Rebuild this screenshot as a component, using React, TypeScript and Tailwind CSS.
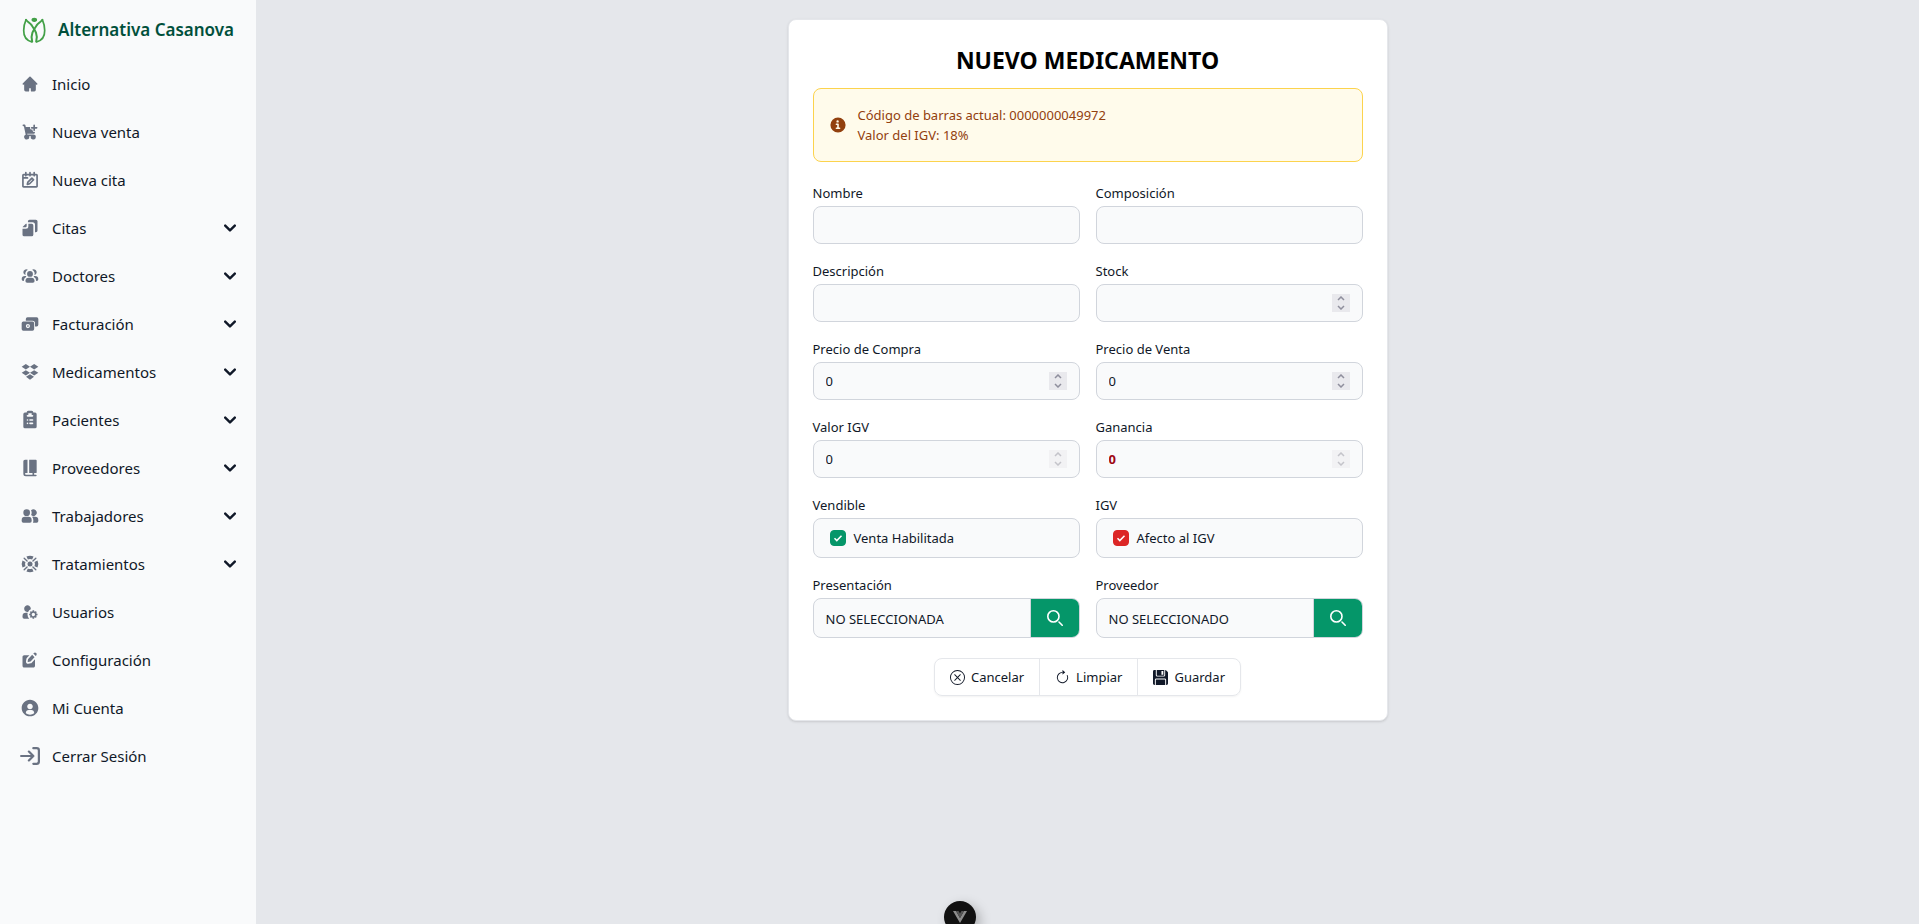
import { useState, type ReactNode } from "react";
import { BsXCircle, BsArrowClockwise, BsFloppyFill } from "react-icons/bs";

type NavItem = { label: string; icon: ReactNode; expandable?: boolean };

function Icon({ children }: { children: ReactNode }) {
  return (
    <svg className="size-5 shrink-0 text-gray-500" viewBox="0 0 24 24" fill="currentColor" fillRule="evenodd" aria-hidden="true">
      {children}
    </svg>
  );
}

const items: NavItem[] = [
  {
    label: "Inicio",
    icon: (
      <Icon>
        <path d="M11.293 3.293a1 1 0 0 1 1.414 0l6 6 2 2a1 1 0 0 1-1.414 1.414L19 12.414V19a2 2 0 0 1-2 2h-3a1 1 0 0 1-1-1v-3h-2v3a1 1 0 0 1-1 1H7a2 2 0 0 1-2-2v-6.586l-.293.293a1 1 0 0 1-1.414-1.414l2-2 6-6Z" />
      </Icon>
    ),
  },
  {
    label: "Nueva venta",
    icon: (
      <Icon>
        <path d="M12.268 6A2 2 0 0 0 14 9h1v1a2 2 0 0 0 3.04 1.708l-.311 1.496a1 1 0 0 1-.979.796H8.605l.208 1H16a3 3 0 1 1-2.83 2h-2.34a3 3 0 1 1-4.009-1.76L4.686 5H4a1 1 0 0 1 0-2h1.5a1 1 0 0 1 .979.796L6.939 6h5.329Z" />
        <path d="M18 4a1 1 0 1 0-2 0v2h-2a1 1 0 1 0 0 2h2v2a1 1 0 1 0 2 0V8h2a1 1 0 1 0 0-2h-2V4Z" />
      </Icon>
    ),
  },
  {
    label: "Nueva cita",
    icon: (
      <Icon>
        <g fill="none" stroke="currentColor" strokeWidth="2" strokeLinecap="round" strokeLinejoin="round">
          <path d="M3.500 6.400v13.100a.8.8 0 0 0 .8.8h15.400a.8.8 0 0 0 .8-.8V6.400a.8.800 0 0 0-.8-.8H4.300a.8.8 0 0 0-.8.8ZM4 9.500h5M7 3v4M12 3v4M17 3v4" />
          <path d="m9.500 14.500 4.800-4.800 2 2-4.800 4.800-2.700.700.700-2.700Z" />
        </g>
      </Icon>
    ),
  },
  {
    label: "Citas",
    expandable: true,
    icon: (
      <Icon>
        <path d="M9.500 4a2 2 0 0 1 2-2H19a2 2 0 0 1 2 2v11a2 2 0 0 1-2 2h-1V8a3 3 0 0 0-3-3H9.500V4Z" />
        <path d="M8 7v3a1 1 0 0 1-1 1H3.200c.1-.3.200-.5.500-.8l2.700-2.700c.3-.3.500-.400.800-.5H8Zm2 0v3a3 3 0 0 1-3 3H3v7a2 2 0 0 0 2 2h9a2 2 0 0 0 2-2V9a2 2 0 0 0-2-2h-4Z" />
      </Icon>
    ),
  },
  {
    label: "Doctores",
    expandable: true,
    icon: (
      <Icon>
        <path d="M12 6a3.5 3.5 0 1 0 0 7 3.5 3.5 0 0 0 0-7Zm-1.5 8a4 4 0 0 0-4 4 2 2 0 0 0 2 2h7a2 2 0 0 0 2-2 4 4 0 0 0-4-4h-3Zm6.82-3.096a5.51 5.51 0 0 0-2.797-6.293 3.5 3.5 0 1 1 2.796 6.292ZM19.5 18h.5a2 2 0 0 0 2-2 4 4 0 0 0-4-4h-1.1a5.503 5.503 0 0 1-.471.762A5.998 5.998 0 0 1 19.5 18ZM4 7.5a3.5 3.5 0 0 1 5.477-2.889 5.5 5.5 0 0 0-2.796 6.293A3.501 3.501 0 0 1 4 7.5ZM7.1 12H6a4 4 0 0 0-4 4 2 2 0 0 0 2 2h.5a5.998 5.998 0 0 1 3.071-5.238A5.505 5.505 0 0 1 7.1 12Z" />
      </Icon>
    ),
  },
  {
    label: "Facturación",
    expandable: true,
    icon: (
      <Icon>
        <path d="M7 6a2 2 0 0 1 2-2h11a2 2 0 0 1 2 2v7a2 2 0 0 1-2 2h-2v-4a3 3 0 0 0-3-3H7V6Z" />
        <path d="M2 11a2 2 0 0 1 2-2h11a2 2 0 0 1 2 2v7a2 2 0 0 1-2 2H4a2 2 0 0 1-2-2v-7Zm7.5 1a2.5 2.5 0 1 0 0 5 2.5 2.5 0 0 0 0-5Z" />
        <path d="M10.5 14.5a1 1 0 1 1-2 0 1 1 0 0 1 2 0Z" />
      </Icon>
    ),
  },
  {
    label: "Medicamentos",
    expandable: true,
    icon: (
      <Icon>
        <path d="M7 2.500 12 5.700 7 8.900 2 5.700ZM17 2.500l5 3.200-5 3.200-5-3.200ZM7 9.800l5 3.200-5 3.200L2 13ZM17 9.800l5 3.200-5 3.200-5-3.200ZM7.200 17.800l4.800-3 4.800 3-4.800 3.500Z" />
      </Icon>
    ),
  },
  {
    label: "Pacientes",
    expandable: true,
    icon: (
      <Icon>
        <path d="M8 3a2 2 0 0 1 2-2h4a2 2 0 0 1 2 2h2a2 2 0 0 1 2 2v15a2 2 0 0 1-2 2H6a2 2 0 0 1-2-2V5a2 2 0 0 1 2-2h2Zm6 1h-4v2H9a1 1 0 0 0 0 2h6a1 1 0 1 0 0-2h-1V4Zm-3 8a1 1 0 0 1 1-1h3a1 1 0 1 1 0 2h-3a1 1 0 0 1-1-1Zm-2-1a1 1 0 1 0 0 2h.01a1 1 0 1 0 0-2H9Zm2 5a1 1 0 0 1 1-1h3a1 1 0 1 1 0 2h-3a1 1 0 0 1-1-1Zm-2-1a1 1 0 1 0 0 2h.01a1 1 0 1 0 0-2H9Z" />
      </Icon>
    ),
  },
  {
    label: "Proveedores",
    expandable: true,
    icon: (
      <Icon>
        <path d="M6 2a2 2 0 0 0-2 2v15a3 3 0 0 0 3 3h12a1 1 0 1 0 0-2h-2v-2h2a1 1 0 0 0 1-1V3a1 1 0 0 0-1-1h-8v16h4v2H7a1 1 0 1 1 0-2h2V2H6Z" />
      </Icon>
    ),
  },
  {
    label: "Trabajadores",
    expandable: true,
    icon: (
      <Icon>
        <path d="M8 4a4 4 0 1 0 0 8 4 4 0 0 0 0-8Zm-2 9a4 4 0 0 0-4 4v1a2 2 0 0 0 2 2h8a2 2 0 0 0 2-2v-1a4 4 0 0 0-4-4H6Zm7.25-2.095c.478-.86.75-1.85.75-2.905a5.973 5.973 0 0 0-.75-2.906 4 4 0 1 1 0 5.811ZM15.466 20c.34-.588.535-1.271.535-2v-1a5.978 5.978 0 0 0-1.528-4H18a4 4 0 0 1 4 4v1a2 2 0 0 1-2 2h-4.535Z" />
      </Icon>
    ),
  },
  {
    label: "Tratamientos",
    expandable: true,
    icon: (
      <Icon>
        <circle cx="12" cy="12" r="3" />
        <g fill="none" stroke="currentColor" strokeWidth="4">
          <path d="M8.600 4.800a8 8 0 0 1 6.800 0M8.600 19.200a8 8 0 0 0 6.800 0M4.800 8.600a8 8 0 0 0 0 6.800M19.200 8.600a8 8 0 0 1 0 6.800" />
        </g>
        <g fill="none" stroke="currentColor" strokeWidth="1.600" strokeLinecap="round">
          <path d="m5 5 3.500 3.500M19 5l-3.500 3.500M5 19l3.500-3.500M19 19l-3.500-3.500" />
        </g>
      </Icon>
    ),
  },
  {
    label: "Usuarios",
    icon: (
      <Icon>
        <path d="M17 10v1.126c.367.095.714.24 1.032.428l.796-.797 1.415 1.415-.797.796c.188.318.333.665.428 1.032H21v2h-1.126c-.095.367-.24.714-.428 1.032l.797.796-1.415 1.415-.796-.797a3.979 3.979 0 0 1-1.032.428V20h-2v-1.126a3.977 3.977 0 0 1-1.032-.428l-.796.797-1.415-1.415.797-.796A3.975 3.975 0 0 1 12.126 16H11v-2h1.126c.095-.367.24-.714.428-1.032l-.797-.796 1.415-1.415.796.797A3.977 3.977 0 0 1 15 11.126V10h2Zm.406 3.578.016.016c.354.358.574.85.578 1.392v.028a2 2 0 0 1-3.409 1.406l-.01-.012a2 2 0 0 1 2.826-2.83ZM5 8a4 4 0 1 1 7.938.703 7.029 7.029 0 0 0-3.235 3.235A4 4 0 0 1 5 8Zm4.29 5H7a4 4 0 0 0-4 4v1a2 2 0 0 0 2 2h6.101A6.979 6.979 0 0 1 9 15c0-.695.101-1.366.29-2Z" />
      </Icon>
    ),
  },
  {
    label: "Configuración",
    icon: (
      <Icon>
        <path d="M11.32 6.176H5c-1.105 0-2 .949-2 2.118v10.588C3 20.052 3.895 21 5 21h11c1.105 0 2-.948 2-2.118v-7.75l-3.914 4.144A2.46 2.46 0 0 1 12.81 16l-2.681.568c-1.75.37-3.292-1.263-2.942-3.115l.536-2.839c.097-.512.335-.983.684-1.352l2.914-3.086Z" />
        <path d="M19.846 4.318a2.148 2.148 0 0 0-.437-.692 2.014 2.014 0 0 0-.654-.463 1.92 1.92 0 0 0-1.544 0 2.014 2.014 0 0 0-.654.463l-.546.578 2.852 3.02.546-.579a2.14 2.14 0 0 0 .437-.692 2.244 2.244 0 0 0 0-1.635ZM17.45 8.721 14.597 5.7 9.82 10.76a.54.54 0 0 0-.137.27l-.536 2.84c-.07.37.239.696.588.622l2.682-.567a.492.492 0 0 0 .255-.145l4.778-5.06Z" />
      </Icon>
    ),
  },
  {
    label: "Mi Cuenta",
    icon: (
      <Icon>
        <path d="M12 20a7.966 7.966 0 0 1-5.002-1.756l.002.001v-.683c0-1.794 1.492-3.25 3.333-3.25h3.334c1.84 0 3.333 1.456 3.333 3.25v.683A7.966 7.966 0 0 1 12 20ZM2 12C2 6.477 6.477 2 12 2s10 4.477 10 10c0 5.5-4.44 9.963-9.932 10h-.138C6.438 21.962 2 17.5 2 12Zm10-5c-1.84 0-3.333 1.455-3.333 3.25S10.159 13.5 12 13.5c1.84 0 3.333-1.455 3.333-3.25S13.841 7 12 7Z" />
      </Icon>
    ),
  },
  {
    label: "Cerrar Sesión",
    icon: (
      <svg className="size-5 shrink-0 text-gray-500" viewBox="0 0 18 16" fill="none" aria-hidden="true">
        <path d="M1 8h11m0 0L8 4m4 4-4 4m4-11h3a2 2 0 0 1 2 2v10a2 2 0 0 1-2 2h-3" stroke="currentColor" strokeWidth="2" strokeLinecap="round" strokeLinejoin="round" />
      </svg>
    ),
  },
];

function Logo() {
  return (
    <svg className="h-7 w-6 shrink-0" viewBox="0 0 24 28" fill="none" aria-hidden="true">
      <ellipse cx="12.300" cy="3.800" rx="2.800" ry="2.100" fill="#43a047" />
      <g stroke="#43a047" strokeLinecap="round" strokeLinejoin="round">
        <path d="M9.800 25.800C4.500 24.500 1.600 20 1.700 14.500 1.800 10.500 2.700 6.500 4 3.800" strokeWidth="1.700" />
        <path d="M14.600 25.800c5.300-1.300 8.200-5.800 8.100-11.300-.1-4-1-8-2.300-10.700" strokeWidth="1.700" />
        <path d="M4 3.800C5.500 6 8 7 9.600 9.200c3 4.300 6.800 9.300 4.600 16.300" strokeWidth="2" />
        <path d="M20.400 3.800c-1.500 2.200-4 3.200-5.600 5.400-3 4.300-6.800 9.300-4.600 16.300" strokeWidth="2" />
      </g>
    </svg>
  );
}

function Sidebar() {
  return (
    <aside className="w-64 shrink-0 bg-gray-50">
      <a href="#" className="flex h-[60px] items-center gap-3 pl-[22px]">
        <Logo />
        <span className="text-[17px] leading-7 font-semibold text-emerald-900">Alternativa Casanova</span>
      </a>
      <nav>
        <ul className="px-3">
          {items.map((item) => (
            <li key={item.label}>
              {item.expandable ? (
                <button type="button" className="flex h-12 w-full items-center gap-3 px-2 text-left text-gray-900">
                  {item.icon}
                  <span className="flex-1">{item.label}</span>
                  <svg className="size-3" viewBox="0 0 10 6" fill="none" aria-hidden="true">
                    <path d="m1 1 4 4 4-4" stroke="currentColor" strokeWidth="2" strokeLinecap="round" strokeLinejoin="round" />
                  </svg>
                </button>
              ) : (
                <a href="#" className="flex h-12 items-center gap-3 px-2 text-gray-900">
                  {item.icon}
                  <span>{item.label}</span>
                </a>
              )}
            </li>
          ))}
        </ul>
      </nav>
    </aside>
  );
}

const boxClass = "flex w-full items-center rounded-lg border border-gray-300 bg-gray-50";

function Field({ id, label, children }: { id: string; label: string; children: ReactNode }) {
  return (
    <div>
      <label htmlFor={id} className="mb-0.5 block leading-[22px]">
        {label}
      </label>
      {children}
    </div>
  );
}

function TextField({ id, label }: { id: string; label: string }) {
  return (
    <Field id={id} label={label}>
      <input id={id} type="text" className="block h-[38px] w-full rounded-lg border border-gray-300 bg-gray-50 px-3" />
    </Field>
  );
}

function NumberField({ id, label, initial = "", readOnly = false, strong = false }: { id: string; label: string; initial?: string; readOnly?: boolean; strong?: boolean }) {
  const [value, setValue] = useState(initial);
  const step = (delta: number) => setValue(String(Number(value) + delta));
  return (
    <Field id={id} label={label}>
      <div className={`${boxClass} h-[38px] px-3`}>
        <input
          id={id}
          type="text"
          inputMode="decimal"
          value={value}
          readOnly={readOnly}
          onChange={(e) => setValue(e.target.value)}
          className={`min-w-0 flex-1 bg-transparent pt-0.5 outline-none ${strong ? "font-bold text-red-800" : ""}`}
        />
        <span className={`flex size-[18px] flex-col ${readOnly ? "bg-[#f2f2f4] text-[#c4c4ca]" : "bg-[#e9e9ed] text-[#8f8f9d]"}`}>
          {[1, -1].map((delta) => (
            <button
              key={delta}
              type="button"
              disabled={readOnly}
              aria-label={delta > 0 ? "Aumentar" : "Disminuir"}
              onClick={() => step(delta)}
              className="flex h-[9px] items-center justify-center"
            >
              <svg className="h-[5px] w-2" viewBox="0 0 8 5" fill="none" aria-hidden="true">
                <path d={delta > 0 ? "m1 4 3-3 3 3" : "m1 1 3 3 3-3"} stroke="currentColor" strokeWidth="1.500" />
              </svg>
            </button>
          ))}
        </span>
      </div>
    </Field>
  );
}

function CheckField({ id, label, text, boxColor }: { id: string; label: string; text: string; boxColor: string }) {
  return (
    <Field id={id} label={label}>
      <div className={`${boxClass} h-10 gap-2 px-4`}>
        <span className="grid size-4">
          <input id={id} type="checkbox" defaultChecked className={`peer col-start-1 row-start-1 size-4 appearance-none rounded border border-gray-300 ${boxColor}`} />
          <svg className="pointer-events-none col-start-1 row-start-1 hidden size-4 text-white peer-checked:block" viewBox="0 0 16 16" fill="none" aria-hidden="true">
            <path d="m4.500 8.300 2.300 2.300 4.700-4.800" stroke="currentColor" strokeWidth="1.500" />
          </svg>
        </span>
        <label htmlFor={id} className="pt-0.5">{text}</label>
      </div>
    </Field>
  );
}

function SearchField({ id, label, value }: { id: string; label: string; value: string }) {
  return (
    <Field id={id} label={label}>
      <div className={`${boxClass} h-10 overflow-hidden`}>
        <input id={id} type="text" readOnly value={value} className="h-full min-w-0 flex-1 border-r border-gray-300 bg-transparent px-3 pt-0.5 outline-none" />
        <button type="button" aria-label={`Buscar ${label}`} className="flex h-full w-12 items-center justify-center bg-[#059669] text-white">
          <svg className="size-4" viewBox="0 0 20 20" fill="none" aria-hidden="true">
            <path d="m19 19-4-4m0-7A7 7 0 1 1 1 8a7 7 0 0 1 14 0Z" stroke="currentColor" strokeWidth="2" strokeLinecap="round" strokeLinejoin="round" />
          </svg>
        </button>
      </div>
    </Field>
  );
}

const actionClass = "flex items-center gap-[6px] px-[15px]";

export default function App() {
  return (
    <div className="flex min-h-screen bg-gray-200 font-['Noto_Sans',sans-serif] text-[15px]">
      <Sidebar />
      <main className="flex flex-1 items-start justify-center pt-[19px]">
        <form className="w-full max-w-[600px] rounded-lg border border-gray-200 bg-white p-6 text-[13px] text-gray-900 shadow" onSubmit={(e) => e.preventDefault()}>
          <h1 className="mb-3 text-center text-[23px] leading-8 font-bold text-black">NUEVO MEDICAMENTO</h1>
          <div className="mb-5 flex items-center gap-3 rounded-lg border border-[#fcd34d] bg-[#fffbeb] p-4 text-[#92400e]">
            <svg className="size-4 shrink-0" viewBox="0 0 20 20" fill="currentColor" aria-hidden="true">
              <path d="M10 .5a9.5 9.5 0 1 0 9.5 9.5A9.51 9.51 0 0 0 10 .5ZM9.5 4a1.5 1.5 0 1 1 0 3 1.5 1.5 0 0 1 0-3ZM12 15H8a1 1 0 0 1 0-2h1v-3H8a1 1 0 0 1 0-2h2a1 1 0 0 1 1 1v4h1a1 1 0 0 1 0 2Z" />
            </svg>
            <div className="leading-5">
              <p>Código de barras actual: 0000000049972</p>
              <p>Valor del IGV: 18%</p>
            </div>
          </div>
          <div className="grid grid-cols-2 gap-4">
            <TextField id="nombre" label="Nombre" />
            <TextField id="composicion" label="Composición" />
            <TextField id="descripcion" label="Descripción" />
            <NumberField id="stock" label="Stock" />
            <NumberField id="compra" label="Precio de Compra" initial="0" />
            <NumberField id="venta" label="Precio de Venta" initial="0" />
            <NumberField id="valor-igv" label="Valor IGV" initial="0" readOnly />
            <NumberField id="ganancia" label="Ganancia" initial="0" readOnly strong />
            <CheckField id="vendible" label="Vendible" text="Venta Habilitada" boxColor="checked:border-[#059669] checked:bg-[#059669]" />
            <CheckField id="igv" label="IGV" text="Afecto al IGV" boxColor="checked:border-[#dc2626] checked:bg-[#dc2626]" />
            <SearchField id="presentacion" label="Presentación" value="NO SELECCIONADA" />
            <SearchField id="proveedor" label="Proveedor" value="NO SELECCIONADO" />
          </div>
          <div className="mt-5 flex justify-center">
            <div className="flex h-[38px] divide-x divide-gray-200 rounded-lg border border-gray-200 shadow-xs">
              <button type="button" className={actionClass}>
                <BsXCircle className="size-[15px]" />
                <span className="pt-0.5">Cancelar</span>
              </button>
              <button type="reset" className={actionClass}>
                <BsArrowClockwise className="size-[15px]" />
                <span className="pt-0.5">Limpiar</span>
              </button>
              <button type="submit" className={actionClass}>
                <BsFloppyFill className="size-[15px]" />
                <span className="pt-0.5">Guardar</span>
              </button>
            </div>
          </div>
        </form>
      </main>
      <button type="button" aria-label="Vue DevTools" className="fixed -bottom-[9px] left-1/2 flex size-8 -translate-x-1/2 items-center justify-center rounded-full bg-[#111111] shadow-[4px_4px_12px_rgba(0,0,0,0.25)]">
        <svg className="h-3 w-[14px]" viewBox="0 0 14 12" aria-hidden="true">
          <path d="M0 0h3l4 7 4-7h3L7 12Z" fill="#8c8c8c" />
          <path d="M3 0h2.500L7 2.600 8.500 0H11L7 7Z" fill="#555555" />
        </svg>
      </button>
    </div>
  );
}
